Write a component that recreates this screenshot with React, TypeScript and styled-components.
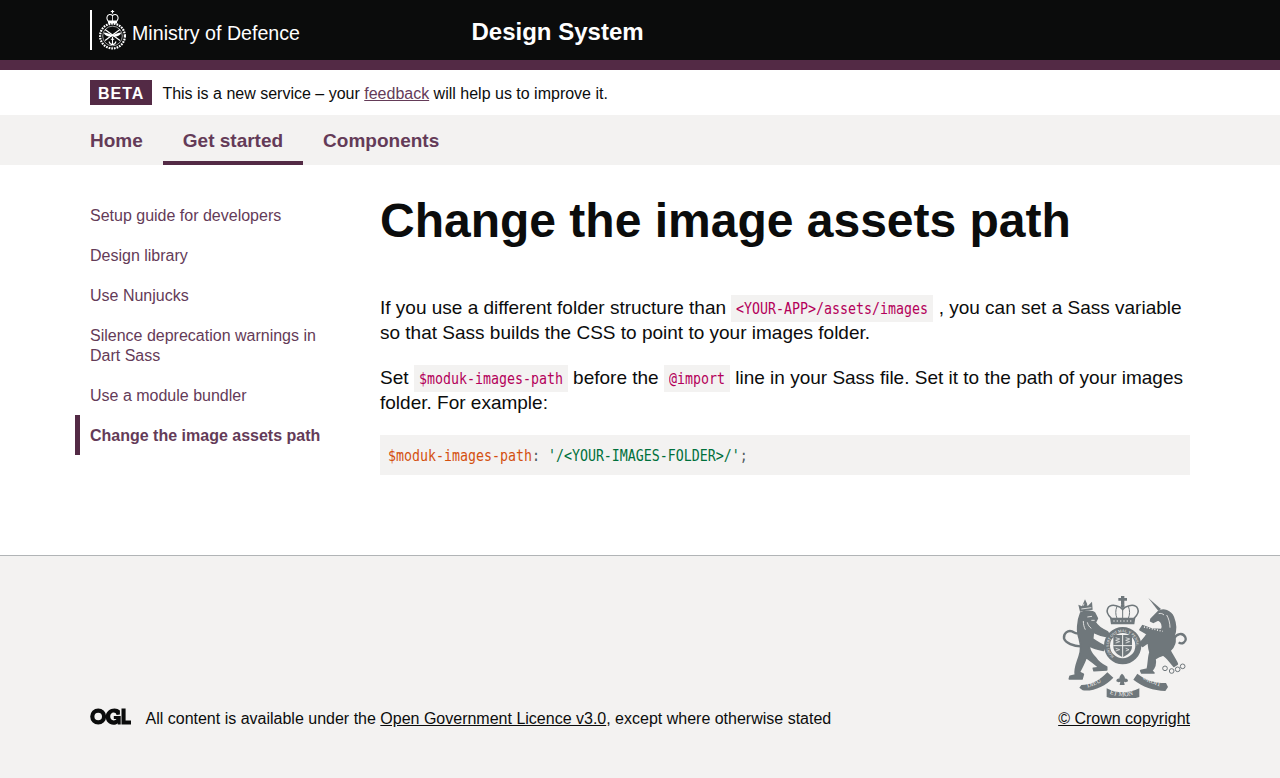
import React from 'react';
import styled, { createGlobalStyle } from 'styled-components';

const purple = '#532a45';
const linkPurple = '#643b58';
const crestGrey = '#6f777b';
const paleGrey = '#f3f2f1';

const GlobalStyle = createGlobalStyle`
  html, body {
    margin: 0;
    padding: 0;
    background: #fff;
    color: #0b0c0c;
    font-family: "Liberation Sans", Arial, sans-serif;
  }
`;

const Wrapper = styled.div`
  width: 1100px;
  margin: 0 auto;
`;

const Header = styled.header`
  background: #0b0c0c;
  height: 60px;
  border-bottom: 10px solid ${purple};
`;

const HeaderInner = styled(Wrapper)`
  display: flex;
  align-items: center;
  height: 60px;
`;

const LogoLink = styled.a`
  display: flex;
  width: 381.5px;
  color: #fff;
`;

const ServiceName = styled.span`
  color: #fff;
  font-size: 24px;
  font-weight: 700;
  line-height: 30px;
  margin-top: 4px;
`;

const LogoText = styled.text`
  font-family: "Liberation Sans", Arial, sans-serif;
  font-size: 20px;
  fill: #fff;
`;

const PhaseBanner = styled(Wrapper)`
  display: flex;
  align-items: center;
  height: 45px;
  font-size: 16px;
`;

const Tag = styled.strong`
  background: ${purple};
  color: #fff;
  font-size: 16px;
  letter-spacing: 1px;
  line-height: 16px;
  padding: 6px 8px 3px;
  margin-right: 10px;
`;

const BannerText = styled.span`
  padding-top: 2px;
`;

const FeedbackLink = styled.a`
  color: ${linkPurple};
  text-decoration: underline;
`;

const NavBar = styled.nav`
  background: ${paleGrey};
  height: 50px;
`;

const NavList = styled(Wrapper)`
  display: flex;
  height: 50px;
`;

const NavItem = styled.a<{ $active?: boolean }>`
  display: block;
  box-sizing: border-box;
  height: 50px;
  padding: 15px 20px 0;
  font-size: 19px;
  line-height: 22px;
  font-weight: 700;
  color: ${linkPurple};
  border-bottom: 4px solid ${p => (p.$active ? purple : 'transparent')};

  &:first-child {
    padding-left: 0;
  }
`;

const Layout = styled(Wrapper)`
  display: flex;
  min-height: 390px;
`;

const SideNav = styled.aside`
  width: 290px;
  padding-top: 30px;
  flex-shrink: 0;
`;

const SideItem = styled.a<{ $active?: boolean }>`
  display: block;
  width: 245px;
  margin-left: -15px;
  padding: 11px 0 9px ${p => (p.$active ? '10px' : '15px')};
  font-size: 16px;
  line-height: 20px;
  font-weight: ${p => (p.$active ? 700 : 400)};
  color: ${linkPurple};
  border-left: ${p => (p.$active ? `5px solid ${purple}` : '0')};
`;

const Main = styled.main`
  flex: 1;
`;

const Title = styled.h1`
  margin: 26px 0 44px;
  font-size: 48px;
  line-height: 60px;
  font-weight: 700;
`;

const Para = styled.p`
  margin: 0 0 20px;
  font-size: 19px;
  line-height: 25px;
`;

const CodeBox = styled.code`
  font-family: "DejaVu Sans Mono", monospace;
  font-size: 16px;
  line-height: 1;
  color: #b4005a;
  background: ${paleGrey};
  padding: 4px 5px;
`;

// the reference mono face is 8px wide at 16px, so the glyphs are squeezed to fit
const CodeGlyphs = styled.span<{ $chars: number }>`
  display: inline-block;
  width: ${p => p.$chars * 8}px;
  white-space: nowrap;
  transform: scaleX(0.83);
  transform-origin: left center;
`;

const CodeBlock = styled.pre`
  margin: 0;
  height: 40px;
  box-sizing: border-box;
  background: ${paleGrey};
  padding: 0 8px;
  font-family: "DejaVu Sans Mono", monospace;
  font-size: 16px;
  line-height: 41px;
  color: #505a5f;
`;

const CodeLine = styled.span`
  display: block;
  transform: scaleX(0.83);
  transform-origin: left center;
`;

const Token = styled.span<{ $color: string }>`
  color: ${p => p.$color};
`;

const Footer = styled.footer`
  background: ${paleGrey};
  border-top: 1px solid #b1b4b6;
  height: 222px;
`;

const FooterInner = styled(Wrapper)`
  display: flex;
  justify-content: space-between;
  align-items: flex-end;
  padding-top: 40px;
`;

const Licence = styled.div`
  display: flex;
  align-items: flex-start;
  font-size: 16px;
  line-height: 20px;
`;

const FooterLink = styled.a`
  color: #0b0c0c;
  text-decoration: underline;
`;

const OglLogo = styled.svg`
  width: 41px;
  height: 17px;
  margin: -1px 14.5px 0 0;
  flex-shrink: 0;
`;

const Crown = styled.div`
  display: flex;
  flex-direction: column;
  align-items: flex-end;
  font-size: 16px;
  line-height: 20px;
`;

const CrestSvg = styled.svg`
  width: 125px;
  height: 102px;
  margin: 0 3px 11px 0;
`;

const CrestLabel = styled.text`
  font-family: "Liberation Serif", serif;
  font-size: 19px;
  fill: ${paleGrey};
`;

const GarterLabel = styled.text`
  font-family: "Liberation Serif", serif;
  font-size: 12px;
  fill: ${paleGrey};
`;

const InlineCode = ({ children }: { children: string }) => (
  <CodeBox>
    <CodeGlyphs $chars={children.length}>{children}</CodeGlyphs>
  </CodeBox>
);

const MoDLogo = () => (
  <svg width="212" height="40" viewBox="0 0 212 40" aria-hidden="true">
    <rect x="0" y="0" width="2" height="40" fill="#fff" />
    {/* crown */}
    <path d="M22.500 0v3.500M20.800 1.500h3.400" stroke="#fff" strokeWidth="1.200" />
    <path d="M18 11c-2-2.500-1.200-6 1.400-6.500 1.200-.2 2.300.3 3.100 1.200.8-.9 1.900-1.400 3.100-1.200 2.600.5 3.400 4 1.400 6.500z" fill="none" stroke="#fff" strokeWidth="1.100" />
    <path d="M22.500 5v6" stroke="#fff" strokeWidth="0.800" />
    <rect x="18" y="11" width="9" height="2.400" fill="#fff" />
    {/* wreath */}
    <circle cx="22.500" cy="26" r="12.400" fill="none" stroke="#fff" strokeWidth="2.200" strokeDasharray="1.700 1" />
    <circle cx="22.500" cy="26" r="9.800" fill="none" stroke="#fff" strokeWidth="0.600" />
    {/* crossed swords, wings and anchor */}
    <path d="M15 19.500l15 11M30 19.500l-15 11" stroke="#fff" strokeWidth="1.200" />
    <path d="M13.500 22.500c3.500.3 6.500 1.200 9 2.800 2.500-1.600 5.500-2.500 9-2.800-1.500 3.500-5.500 4.500-9 4-3.500.5-7.500-.5-9-4z" fill="#fff" />
    <path d="M22.500 27v7.500M19 31.500c.6 2 1.900 3 3.500 3s2.900-1 3.500-3M20.800 29.200h3.400" fill="none" stroke="#fff" strokeWidth="1.100" />
    <LogoText x="42" y="30" textLength="168" lengthAdjust="spacingAndGlyphs">Ministry of Defence</LogoText>
  </svg>
);

const Ogl = () => (
  <OglLogo viewBox="0 0 41 17" aria-hidden="true">
    <path
      fillRule="evenodd"
      fill="#0b0c0c"
      d="M8.200 0.500a8 8 0 1 0 0 16 8 8 0 0 0 0-16zm0 4.200a3.800 3.800 0 1 1 0 7.600 3.800 3.800 0 0 1 0-7.600z"
    />
    <path
      fill="#0b0c0c"
      d="M24.500 0.500c2.200 0 4 .7 5.400 2v-2h0v6l-3.300 .4c-.6-1.500-1.500-2.300-3-2.300-2 0-3.400 1.700-3.400 3.900s1.400 3.900 3.500 3.900c1.300 0 2.300-.5 2.800-1.400h-2.700V8h6.900v8.500h-3v-1.300c-1.100 1-2.500 1.600-4.300 1.600-4.600 0-7.700-3.500-7.700-8.200S20 .5 24.500 .5z"
    />
    <path fill="#0b0c0c" d="M31.500 0.500h4.100v12h5.400v4h-9.500z" />
  </OglLogo>
);

// drawn at 3x, in the coordinates of a 3x crop of the reference
const Crest = () => (
  <CrestSvg viewBox="36 21 375 306" aria-hidden="true">
    <defs>
      <path id="garter-arc" d="M192 202a41 41 0 1 1 52 0" />
      <path id="dieu-arc" d="M106 296C128 294 152 282 176 262" />
      <path id="et-mon-arc" d="M178 314C204 324 236 324 260 314" />
      <path id="droit-arc" d="M272 264C292 280 314 290 342 294" />
    </defs>
    <g fill={crestGrey}>
      {/* royal crown */}
      <path d="M213 18h10v9h8v8h-8v12h-10V35h-8v-8h8z" />
      <circle cx="218" cy="51" r="6" />
      <path
        d="M184 88C160 66 174 45 198 50C208 52 214 56 218 62C222 56 228 52 238 50C262 45 276 66 252 88"
        fill="none"
        stroke={crestGrey}
        strokeWidth="4.500"
      />
      <path d="M218 58v30M201 52c-5 12-5 24 0 36M235 52c5 12 5 24 0 36" fill="none" stroke={crestGrey} strokeWidth="3" />
      <path d="M180 86h76l-3 20h-70z" />
      <path d="M190 96h56" stroke={paleGrey} strokeWidth="3" strokeDasharray="4 6" />

      {/* garter */}
      <path fillRule="evenodd" d="M218 114a56 56 0 1 0 0 112 56 56 0 0 0 0-112zm0 18a38 38 0 1 1 0 76 38 38 0 0 1 0-76z" />
      <GarterLabel>
        <textPath href="#garter-arc">HONI SOIT QUI MAL Y PENSE</textPath>
      </GarterLabel>
      {/* shield */}
      <path d="M190 138h56v34c0 16-13 26-28 33-15-7-28-17-28-33z" />
      <path d="M218 138v67M190 170h56" stroke={paleGrey} strokeWidth="3" />
      <path
        d="M197 146l12 4-12 4 12 4-12 4M227 146l12 4-12 4 12 4-12 4M197 178l12 4-12 4M227 178l10 4-10 4"
        fill="none"
        stroke={paleGrey}
        strokeWidth="2.200"
      />

      {/* lion crown */}
      <path d="M90 68L85 47L96 52L105 31L114 50L126 38L128 62z" />
      <path d="M94 60L124 56M100 50L102 44M112 50L114 44" stroke={paleGrey} strokeWidth="2.500" fill="none" />
      {/* lion */}
      <path
        stroke={crestGrey}
        strokeWidth="5"
        strokeLinejoin="round"
        d="M92 72C100 66 128 64 134 72L142 88L136 100C140 108 150 118 172 128L178 138L168 142C155 140 140 135 130 130L128 150C140 160 155 165 165 172L160 184C145 182 130 178 118 170C118 185 125 195 135 205C145 220 160 230 170 234L170 243L132 245L130 238L148 236C135 225 118 212 108 205C105 220 92 240 88 250L100 256L96 270L58 270L60 262L76 258C72 240 82 220 88 200C95 180 92 165 88 150C80 130 82 95 92 72Z"
      />
      <path d="M112 84l14-2M124 94l10 0M112 100c2 8 6 14 12 18M100 96c0 10 2 18 6 26" fill="none" stroke={paleGrey} strokeWidth="2.500" />
      <path d="M92 172C72 172 46 162 42 148C40 132 54 123 66 127C74 130 78 136 85 132" fill="none" stroke={crestGrey} strokeWidth="7" />

      {/* unicorn */}
      <path d="M295 27L333 60L325 66Z" />
      <path
        stroke={crestGrey}
        strokeWidth="5"
        strokeLinejoin="round"
        d="M303 90L325 68C340 58 362 66 370 85C378 105 378 125 372 140C380 155 372 175 360 185C368 200 378 215 382 225L372 232C360 220 352 205 340 198C330 202 320 205 315 210C318 225 312 238 305 245L312 252L275 252L272 245L292 240C296 225 295 205 300 190C296 178 296 170 295 160L278 172L268 165L285 145L292 135L270 122L278 110L305 120L335 122C340 110 335 98 325 92L310 100L302 96Z"
      />
      <path d="M326 74c6-2 12 0 16 4M350 78c6 10 10 24 10 38" fill="none" stroke={paleGrey} strokeWidth="2.500" />
      <path d="M282 114L338 127" stroke={paleGrey} strokeWidth="4" strokeDasharray="3 5" />
      <path d="M372 148C380 135 398 128 406 145C411 158 396 168 386 160" fill="none" stroke={crestGrey} strokeWidth="7" />
      {/* chain rings */}
      <g fill="none" stroke={crestGrey} strokeWidth="3">
        <circle cx="345" cy="238" r="7" />
        <circle cx="365" cy="246" r="7" />
        <circle cx="383" cy="241" r="7" />
        <circle cx="398" cy="232" r="7" />
      </g>

      {/* motto ribbons */}
      <path d="M94 288C124 288 150 274 172 250L190 266C166 292 130 308 98 304L88 296z" />
      <path d="M170 298C200 314 236 314 268 298L268 324C236 334 200 334 170 324z" />
      <path d="M262 254C284 272 312 282 348 282L354 294L346 306C310 304 278 294 250 272z" />
      <CrestLabel><textPath href="#dieu-arc" startOffset="8%">DIEU</textPath></CrestLabel>
      <CrestLabel><textPath href="#et-mon-arc" startOffset="1%">ET MON</textPath></CrestLabel>
      <CrestLabel><textPath href="#droit-arc" startOffset="10%">DROIT</textPath></CrestLabel>
      {/* thistle and rose */}
      <path d="M216 254c5 4 9 9 9 15 5-1 9 2 9 8-4 3-8 3-12 1l2 10h-15l2-10c-4 2-8 2-12-1 0-6 4-9 9-8 0-6 3-11 8-15z" />
    </g>
  </CrestSvg>
);

export default function App() {
  return (
    <>
      <GlobalStyle />
      <Header>
        <HeaderInner>
          <LogoLink>
            <MoDLogo />
          </LogoLink>
          <ServiceName>Design System</ServiceName>
        </HeaderInner>
      </Header>
      <PhaseBanner>
        <Tag>BETA</Tag>
        <BannerText>
          This is a new service – your <FeedbackLink>feedback</FeedbackLink> will help us to improve it.
        </BannerText>
      </PhaseBanner>
      <NavBar>
        <NavList>
          <NavItem>Home</NavItem>
          <NavItem $active>Get started</NavItem>
          <NavItem>Components</NavItem>
        </NavList>
      </NavBar>
      <Layout>
        <SideNav>
          <SideItem>Setup guide for developers</SideItem>
          <SideItem>Design library</SideItem>
          <SideItem>Use Nunjucks</SideItem>
          <SideItem>Silence deprecation warnings in Dart Sass</SideItem>
          <SideItem>Use a module bundler</SideItem>
          <SideItem $active>Change the image assets path</SideItem>
        </SideNav>
        <Main>
          <Title>Change the image assets path</Title>
          <Para>
            If you use a different folder structure than <InlineCode>{'<YOUR-APP>/assets/images'}</InlineCode> , you can set a Sass variable so that Sass builds the CSS to point to your images folder.
          </Para>
          <Para>
            Set <InlineCode>$moduk-images-path</InlineCode> before the <InlineCode>@import</InlineCode> line in your Sass file. Set it to the path of your images folder. For example:
          </Para>
          <CodeBlock>
            <CodeLine>
              <Token $color="#d4500f">$moduk-images-path</Token>: <Token $color="#00703c">'/&lt;YOUR-IMAGES-FOLDER&gt;/'</Token>;
            </CodeLine>
          </CodeBlock>
        </Main>
      </Layout>
      <Footer>
        <FooterInner>
          <Licence>
            <Ogl />
            <span>
              All content is available under the <FooterLink>Open Government Licence v3.0</FooterLink>, except where otherwise stated
            </span>
          </Licence>
          <Crown>
            <Crest />
            <FooterLink>© Crown copyright</FooterLink>
          </Crown>
        </FooterInner>
      </Footer>
    </>
  );
}
